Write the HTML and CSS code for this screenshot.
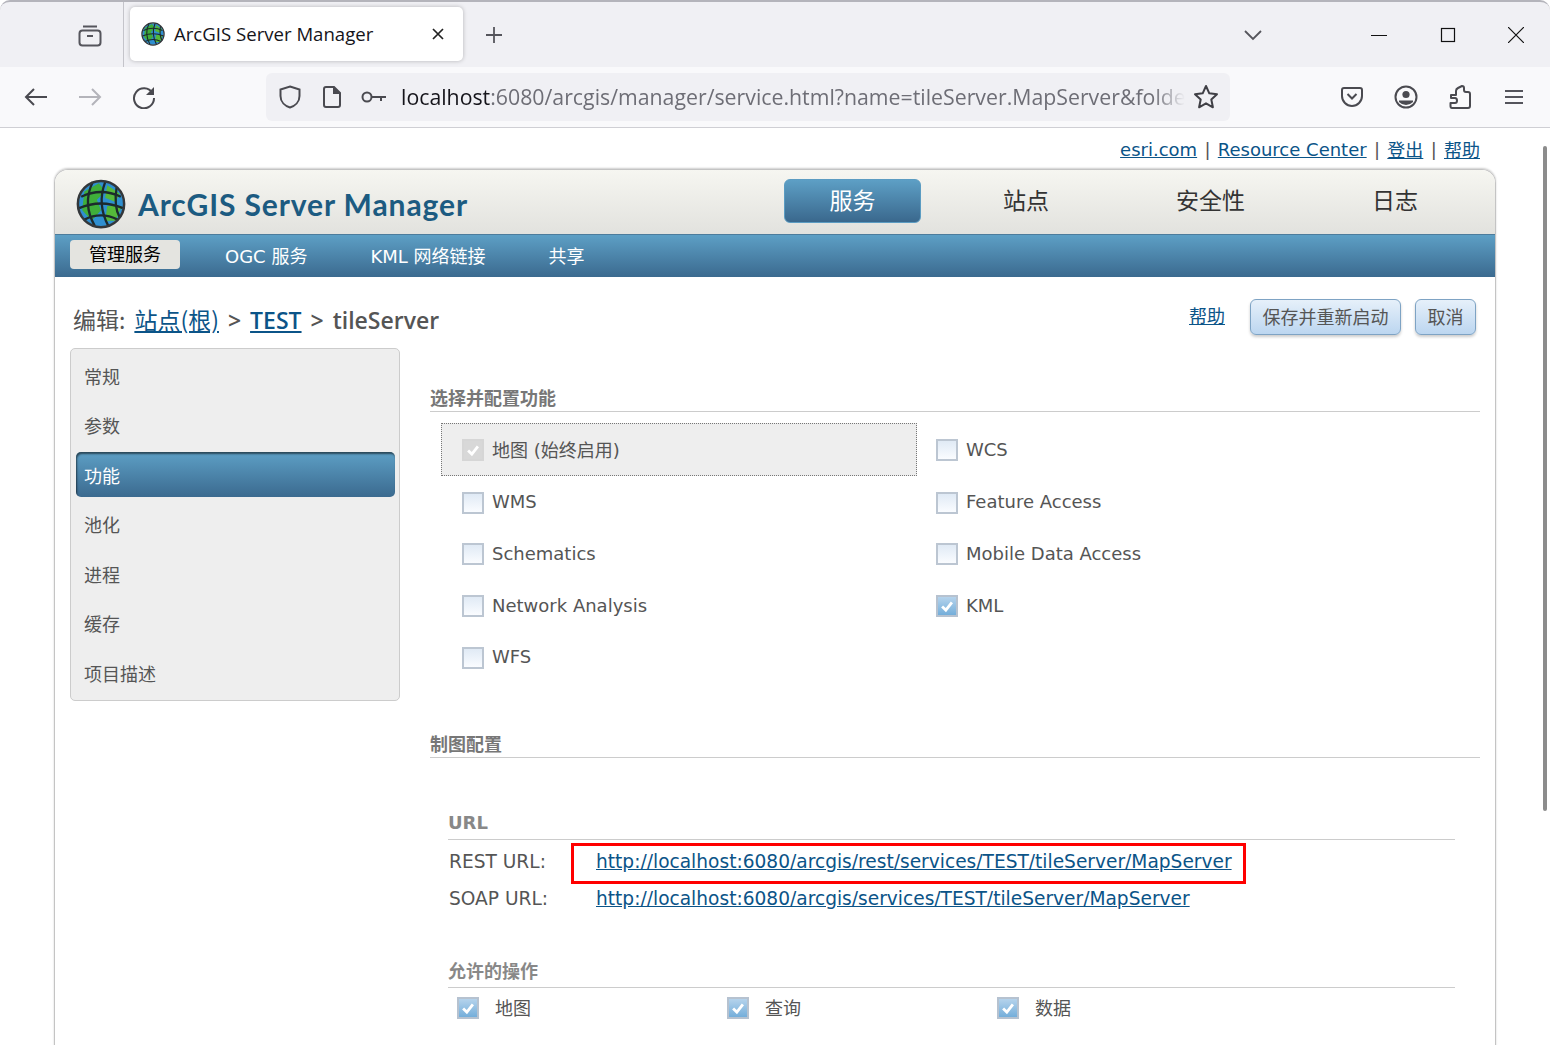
FILE: index.html
```html
<!DOCTYPE html>
<html lang="zh-CN">
<head>
    <meta charset="UTF-8">
    <meta name="viewport" content="width=device-width, initial-scale=1.0">
    <link rel="stylesheet" href="styles.css">
    <title>ArcGIS Server Manager</title>
</head>
<body>
<svg class="defs" width="0" height="0">
    <symbol id="globe" viewBox="0 0 48 48">
        <circle cx="24" cy="24" r="23" fill="#e8e8e4"/>
        <circle cx="24" cy="24" r="21.5" fill="#2f8fd0"/>
        <path d="M8 12 L22 4 L28 12 L20 20 L24 30 L15 40 L6 30 Z" fill="#3fae3a"/>
        <path d="M30 6 L42 14 L38 22 L28 18 Z M30 26 L44 26 L38 40 L28 40 Z" fill="#55b83a"/>
        <path d="M5 17 Q24 8 43 17 M3 28 Q24 19 45 28 M8 39 Q24 31 40 39" fill="none" stroke="#1c2a2c" stroke-width="2.2"/>
        <path d="M16 3 Q6 24 18 45 M28 3 Q20 24 31 45 M39 8 Q36 26 42 37" fill="none" stroke="#1c2a2c" stroke-width="2.2"/>
        <circle cx="24" cy="24" r="22.2" fill="none" stroke="#33373a" stroke-width="2.4"/>
    </symbol>
    <symbol id="tick" viewBox="0 0 22 22">
        <path d="M5 11.5 L9.6 16 L17 6.5" fill="none" stroke="#fff" stroke-width="3.4"/>
    </symbol>
</svg>

<div class="browser">
    <div class="tabstrip">
        <div class="tabs-btn">
            <svg width="26" height="26" viewBox="0 0 26 26" fill="none" stroke="#55555c" stroke-width="2"><path d="M6 4.5 H20"/><rect x="2.500" y="8.500" width="21" height="15" rx="3"/><path d="M10 14 H16"/></svg>
        </div>
        <div class="tab">
            <svg class="tab-icon" width="24" height="24"><use href="#globe"/></svg>
            <span class="tab-title">ArcGIS Server Manager</span>
            <svg width="14" height="14" viewBox="0 0 14 14" stroke="#222" stroke-width="1.700"><path d="M2 2 L12 12 M12 2 L2 12"/></svg>
        </div>
        <svg class="newtab" width="20" height="20" viewBox="0 0 20 20" stroke="#55555c" stroke-width="1.800"><path d="M10 2 V18 M2 10 H18"/></svg>
        <svg class="tablist" width="20" height="12" viewBox="0 0 20 12" fill="none" stroke="#55555c" stroke-width="1.800"><path d="M2 2 L10 10 L18 2"/></svg>
        <div class="winbtns">
            <svg width="16" height="16" viewBox="0 0 16 16" stroke="#111" stroke-width="1"><path d="M0 8.500 H16"/></svg>
            <svg width="16" height="16" viewBox="0 0 16 16" fill="none" stroke="#111" stroke-width="1.200"><rect x="1.500" y="1.500" width="13" height="13"/></svg>
            <svg width="16" height="16" viewBox="0 0 16 16" stroke="#111" stroke-width="1.200"><path d="M0 0 L16 16 M16 0 L0 16"/></svg>
        </div>
    </div>

    <div class="toolbar">
        <div class="tool">
            <svg width="24" height="20" viewBox="0 0 24 20" fill="none" stroke="#4a4a50" stroke-width="2"><path d="M23 10 H2 M10 2 L2 10 L10 18"/></svg>
        </div>
        <div class="tool">
            <svg width="24" height="20" viewBox="0 0 24 20" fill="none" stroke="#b4b4ba" stroke-width="2"><path d="M1 10 H22 M14 2 L22 10 L14 18"/></svg>
        </div>
        <div class="tool">
            <svg width="24" height="24" viewBox="0 0 24 24" fill="none" stroke="#4a4a50" stroke-width="2"><path d="M20.500 8 A10 10 0 1 0 22 13"/><path d="M22 2 V10 H14 Z" fill="#4a4a50" stroke="none"/></svg>
        </div>
        <div class="urlbar">
            <div class="url-icon">
                <svg width="22" height="24" viewBox="0 0 22 24" fill="none" stroke="#4a4a50" stroke-width="2"><path d="M11 1.500 L20.500 4.500 V11 C20.500 17 16 21 11 22.500 C6 21 1.500 17 1.500 11 V4.500 Z"/></svg>
            </div>
            <div class="url-icon">
                <svg width="18" height="22" viewBox="0 0 18 22" fill="none" stroke="#4a4a50" stroke-width="2"><path d="M3 1 H11 L17 7 V19 Q17 21 15 21 H3 Q1 21 1 19 V3 Q1 1 3 1 Z"/><path d="M11 1 V7 H17" fill="#4a4a50"/></svg>
            </div>
            <div class="url-icon">
                <svg width="26" height="14" viewBox="0 0 26 14" fill="none" stroke="#4a4a50" stroke-width="2"><circle cx="6" cy="7" r="4.500"/><path d="M11 7 H25 M20 7 V11"/></svg>
            </div>
            <div class="url-text"><span class="url-host">localhost</span>:6080/arcgis/manager/service.html?name=tileServer.MapServer&amp;folde</div>
            <svg class="star" width="26" height="26" viewBox="0 0 26 26" fill="none" stroke="#3f3f45" stroke-width="2" stroke-linejoin="round"><path d="M13 2 L16.300 9.300 L24 10.200 L18.300 15.500 L19.900 23.300 L13 19.300 L6.100 23.300 L7.700 15.500 L2 10.200 L9.700 9.300 Z"/></svg>
        </div>
        <div class="tool-group">
            <div class="tool">
                <svg width="22" height="20" viewBox="0 0 22 20" fill="none" stroke="#4a4a50" stroke-width="2"><path d="M3 1 H19 Q21 1 21 3 V9 A10 10 0 0 1 1 9 V3 Q1 1 3 1 Z"/><path d="M6.500 7 L11 11.500 L15.500 7"/></svg>
            </div>
            <div class="tool">
                <svg width="24" height="24" viewBox="0 0 24 24" fill="none" stroke="#4a4a50" stroke-width="2"><circle cx="12" cy="12" r="10.500"/><circle cx="12" cy="9.500" r="3.600" fill="#4a4a50" stroke="none"/><path d="M5 15.500 H19 V17 Q16 20 12 20 Q8 20 5 17 Z" fill="#4a4a50" stroke="none"/></svg>
            </div>
            <div class="tool">
                <svg width="22" height="24" viewBox="0 0 22 24" fill="none" stroke="#4a4a50" stroke-width="2" stroke-linejoin="round"><path d="M2 10 H7 V6 Q7 4 9 3 L13 1 Q15 1 15 3 V5 Q15 7 17 7 H19 Q21 7 21 9 V21 Q21 23 19 23 H3 Q1.500 23 1.500 21 V18 H6 Q8 18 8 15.500 Q8 13 6 13 H2 Z"/></svg>
            </div>
            <div class="tool">
                <svg width="20" height="16" viewBox="0 0 20 16" stroke="#55555c" stroke-width="2"><path d="M1 2 H19 M1 8 H19 M1 14 H19"/></svg>
            </div>
        </div>
    </div>
</div>

<div class="viewport">
    <div class="toplinks">
        <a href="#">esri.com</a><span class="sep">|</span><a href="#">Resource Center</a><span class="sep">|</span><a href="#">登出</a><span class="sep">|</span><a href="#">帮助</a>
    </div>

    <div class="frame">
        <div class="header">
            <svg class="logo" width="50" height="50"><use href="#globe"/></svg>
            <span class="brand">ArcGIS Server Manager</span>
            <div class="mainnav">
                <a class="mainnav-item active" href="#">服务</a>
                <a class="mainnav-item" href="#">站点</a>
                <a class="mainnav-item" href="#">安全性</a>
                <a class="mainnav-item" href="#">日志</a>
            </div>
        </div>
        <div class="subnav">
            <a class="subnav-item active" href="#">管理服务</a>
            <a class="subnav-item" href="#">OGC 服务</a>
            <a class="subnav-item" href="#">KML 网络链接</a>
            <a class="subnav-item" href="#">共享</a>
        </div>

        <div class="titlerow">
            <h1 class="pagetitle"><span class="cjk">编辑:</span> <a href="#"><span class="cjk">站点(根)</span></a> &gt; <a href="#">TEST</a> &gt; tileServer</h1>
            <div class="actions">
                <a class="help" href="#">帮助</a>
                <button class="btn" type="button">保存并重新启动</button>
                <button class="btn" type="button">取消</button>
            </div>
        </div>

        <div class="content">
            <ul class="sidebar">
                <li>常规</li>
                <li>参数</li>
                <li class="active">功能</li>
                <li>池化</li>
                <li>进程</li>
                <li>缓存</li>
                <li>项目描述</li>
            </ul>

            <div class="panel">
                <h2 class="section first">选择并配置功能</h2>
                <div class="features">
                    <label class="feature locked"><span class="check disabled"><svg width="18" height="18"><use href="#tick"/></svg></span>地图 (始终启用)</label>
                    <label class="feature"><span class="check"></span>WCS</label>
                    <label class="feature"><span class="check"></span>WMS</label>
                    <label class="feature"><span class="check"></span>Feature Access</label>
                    <label class="feature"><span class="check"></span>Schematics</label>
                    <label class="feature"><span class="check"></span>Mobile Data Access</label>
                    <label class="feature"><span class="check"></span>Network Analysis</label>
                    <label class="feature"><span class="check on"><svg width="18" height="18"><use href="#tick"/></svg></span>KML</label>
                    <label class="feature"><span class="check"></span>WFS</label>
                </div>

                <h2 class="section second">制图配置</h2>
                <div class="sub">
                    <h3 class="subhead url-head">URL</h3>
                    <div class="urlrow">
                        <span class="urlrow-label">REST URL:</span>
                        <span class="urlrow-box marked"><a href="#">http://localhost:6080/arcgis/rest/services/TEST/tileServer/MapServer</a></span>
                    </div>
                    <div class="urlrow">
                        <span class="urlrow-label">SOAP URL:</span>
                        <span class="urlrow-box"><a href="#">http://localhost:6080/arcgis/services/TEST/tileServer/MapServer</a></span>
                    </div>

                    <h3 class="subhead ops-head">允许的操作</h3>
                    <div class="ops">
                        <label class="op"><span class="check on"><svg width="18" height="18"><use href="#tick"/></svg></span>地图</label>
                        <label class="op"><span class="check on"><svg width="18" height="18"><use href="#tick"/></svg></span>查询</label>
                        <label class="op"><span class="check on"><svg width="18" height="18"><use href="#tick"/></svg></span>数据</label>
                    </div>
                </div>
            </div>
        </div>
    </div>

    <div class="scrollbar"></div>
</div>
</body>
</html>
```

FILE: styles.css
```css
* {box-sizing: border-box;}
html, body {margin: 0; height: 1045px; overflow: hidden; background: #fff;}
body {font-family: "DejaVu Sans", "Noto Sans CJK SC", sans-serif; font-size: 18px; color: #555;}
a {color: #0b5488;}
.defs {position: absolute;}

/* browser chrome */
.browser {border-top: 2px solid #b4b4bb; border-radius: 10px 10px 0 0; background: #f0f0f4;}
.tabstrip {display: flex; align-items: center; height: 65px;}
.tabs-btn {display: flex; align-items: center; justify-content: center; width: 124px; height: 65px; padding-left: 70px; padding-right: 13px; border-right: 1px solid #c4c4ca;}
.tab {display: flex; align-items: center; width: 333px; height: 54px; margin-left: 6px; margin-top: -1px; padding: 0 18px 0 11px; background: #fff; border-radius: 5px; box-shadow: 0 0 4px rgba(0,0,0,.25);}
.tab-icon {margin-right: 9px;}
.tab-title {flex: 1; margin-top: -2px; font-family: "Open Sans", sans-serif; font-size: 18.600px; color: #15141a;}
.newtab {margin-left: 21px;}
.tablist {margin-left: 739px;}
.winbtns {display: flex; align-items: center; gap: 52.500px; margin-left: 108px;}
.toolbar {display: flex; align-items: center; height: 61px; padding-left: 9px; background: #f9f9fb; border-bottom: 1px solid #cfcfd4;}
.tool {display: flex; align-items: center; justify-content: center; width: 54px; height: 48px;}
.tool-group {display: flex; margin-left: 95px;}
.urlbar {display: flex; align-items: center; width: 964px; height: 48px; margin-left: 95px; margin-top: -1px; padding-left: 3px; background: #f0f0f4; border-radius: 6px;}
.url-icon {display: flex; align-items: center; justify-content: center; width: 42px; flex: none;}
.url-text {flex: 1; min-width: 0; margin: 0 0 0 6px; white-space: nowrap; font-family: "Open Sans", sans-serif; font-size: 21.300px; color: #6e6e76;
-webkit-mask-image: linear-gradient(to right, #000 96%, transparent 100%); mask-image: linear-gradient(to right, #000 96%, transparent 100%);}
.url-host {color: #15141a;}
.star {flex: none; margin: 0 11px 0 8px;}

/* page */
.viewport {position: relative; height: 918px; overflow: hidden;}
.toplinks {display: flex; justify-content: flex-end; align-items: center; height: 41px; padding: 1px 70px 0 0; font-size: 18px;}
.sep {margin: 0 7.300px; color: #555;}
.scrollbar {position: absolute; right: 3px; top: 18px; width: 4px; height: 665px; background: #8c8c8c; border-radius: 2px;}

.frame {width: 1442px; margin-left: 54px; border: 1px solid #c4c4c4; border-bottom: 0; border-radius: 14px 14px 0 0; box-shadow: 0 -1px 2px rgba(0,0,0,.2); height: 900px;}
.header {display: flex; align-items: center; height: 64px; padding-left: 21px; background: linear-gradient(#f6f6f1, #e2e2de); border-radius: 13px 13px 0 0;}
.logo {flex: none; margin-top: 4px;}
.brand {margin-left: 12px; margin-top: 3px; font-family: "Lato", sans-serif; font-weight: 700; font-size: 30px; letter-spacing: .9px; color: #1c5b81; white-space: nowrap;}
.mainnav {display: flex; gap: 37px; margin-left: 316px; margin-top: -3px;}
.mainnav-item {padding: 0 45px; height: 44px; line-height: 40px; font-family: "Noto Sans CJK SC", sans-serif; font-size: 23px; color: #333; text-decoration: none; border-radius: 6px;}
.mainnav-item.active {padding: 0 44.500px; color: #fff; background: linear-gradient(#5d9fc5, #3a688d); border: 1px solid #5b9cc2; line-height: 38px;}

.subnav {display: flex; align-items: center; gap: 25px; height: 43px; padding: 0 0 3px 15px; background: linear-gradient(#5d9fc5, #3b6a8f); border-top: 1px solid #4d7c9c;}
.subnav-item {padding: 0 19px; color: #fff; text-decoration: none; font-size: 18px;}
.subnav-item.active {height: 29px; line-height: 29px; margin-right: 1px; color: #000; background: #e4e4e0; border-radius: 4px;}

.titlerow {display: flex; justify-content: space-between; height: 71px; padding: 22px 19px 0 18px;}
.pagetitle {margin: -1px 0 0; font-family: "Open Sans", "Noto Sans CJK SC", sans-serif; font-size: 23px; font-weight: 600; line-height: 42px; word-spacing: 3px; color: #555;}
.pagetitle .cjk {font-family: "Noto Sans CJK SC", sans-serif; font-size: 23px; font-weight: 400;}
.actions {display: flex; align-items: flex-start; gap: 14px;}
.help {margin-right: 11px; line-height: 36px; font-size: 18px;}
.btn {height: 36px; padding: 0 11.500px 3px; font-family: inherit; font-size: 18px; color: #555; background: linear-gradient(#e6f0fa, #bcd6f0); border: 1px solid #7ea3c4; border-radius: 6px; box-shadow: 0 2px 3px rgba(0,0,0,.2);}

.content {display: flex; gap: 30px; padding-left: 15px;}
.sidebar {flex: none; width: 330px; height: 353px; margin: 0; padding: 2px 4px 0 5px; list-style: none; background: #eee; border: 1px solid #ccc; border-radius: 5px;}
.sidebar li {display: flex; align-items: center; height: 49.500px; padding-left: 8px; color: #555;}
.sidebar li.active {height: 45px; margin: 2px 0 2.500px; color: #fff; background: linear-gradient(#5d9fc5, #3b6a8f); border-radius: 5px; box-shadow: inset 1px 2px 2px rgba(0,0,0,.55);}

.panel {width: 1050px;}
.section {margin: 0; height: 27px; line-height: 27px; font-size: 18px; font-weight: 700; color: #777; border-bottom: 1px solid #ccc;}
.section.first {margin-top: 37px;}
.section.second {margin-top: 48px;}
.features {display: grid; grid-template-columns: 476px 1fr; grid-template-rows: 52.750px; grid-auto-rows: 51.750px; margin: 11px 0 0 11px;}
.feature {display: flex; align-items: center; padding-left: 21px;}
.feature:nth-child(even) {padding-left: 19px;}
.feature.locked {background: #eee; border: 1px dotted #777; padding-left: 20px;}
.check {display: inline-flex; align-items: center; justify-content: center; flex: none; width: 22px; height: 22px; margin: 2px 8px 0 0; background: linear-gradient(#e0eaf5, #fafcff); border: 2px solid #bcc6d2;}
.check.disabled {background: #d8d8d8; border-color: #d6d6d6;}
.check.on {background: linear-gradient(#b5d3ec, #74aeda); border-color: #b6c2d0;}

.sub {width: 1007px; margin-left: 18px;}
.subhead {margin: 0; height: 26px; font-size: 18px; font-weight: 700; color: #888; border-bottom: 1px solid #ccc;}
.url-head {margin-top: 56px; line-height: 18px;}
.ops-head {margin-top: 48px; line-height: 20px;}
.urlrow {display: flex; align-items: center; font-size: 18.600px;}
.urlrow + .urlrow {height: 30px;}
.urlrow-label {width: 123px; padding-left: 1px;}
.urlrow-box {padding: 0 11px 0 25px;}
.urlrow-box.marked {display: flex; align-items: center; height: 41px; margin-top: 3px; border: 3px solid #f00; padding: 0 11px 3px 22px;}
.ops {display: grid; grid-template-columns: repeat(3, 270px); padding: 6px 0 0 9px;}
.op {display: flex; align-items: center;}
.op .check {margin-right: 16px;}
```
